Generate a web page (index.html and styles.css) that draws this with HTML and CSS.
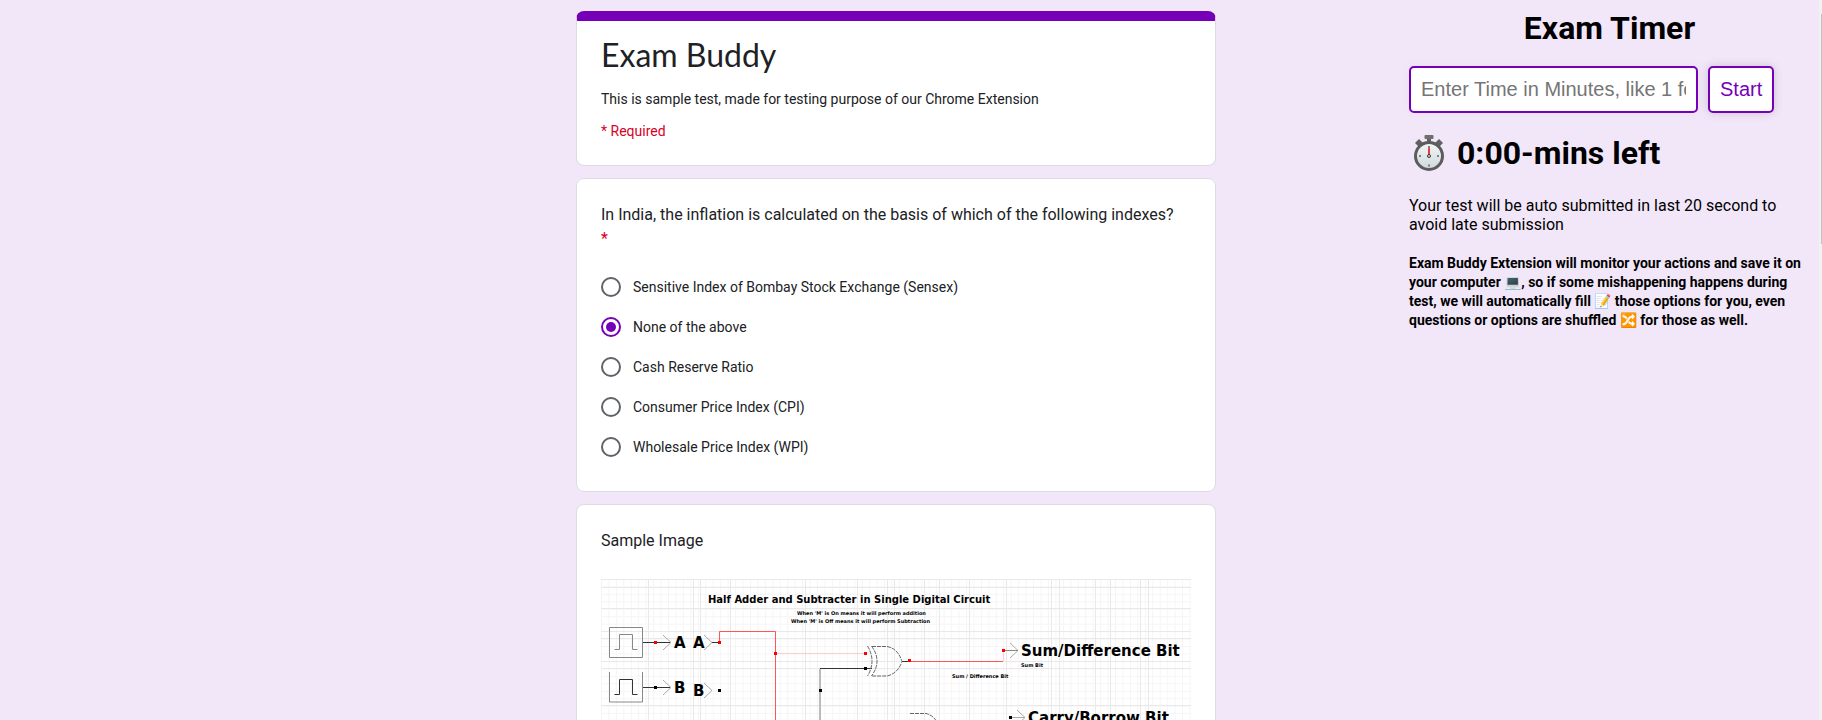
FILE: index.html
```
<!DOCTYPE html>
<html lang="en">
<head>
<meta charset="utf-8">
<title>Exam Buddy</title>
<link rel="stylesheet" href="styles.css">
</head>
<body>
<div class="page">
  <main class="form">
    <header class="card card-header">
      <h1 class="form-title">Exam Buddy</h1>
      <p class="form-description">This is sample test, made for testing purpose of our Chrome Extension</p>
      <p class="form-required">* Required</p>
    </header>

    <fieldset class="card question">
      <legend class="question-title">In India, the inflation is calculated on the basis of which of the following indexes? <span class="star">*</span></legend>
      <div class="options">
        <label class="option"><input class="radio" type="radio" name="index"> Sensitive Index of Bombay Stock Exchange (Sensex)</label>
        <label class="option"><input class="radio" type="radio" name="index" checked> None of the above</label>
        <label class="option"><input class="radio" type="radio" name="index"> Cash Reserve Ratio</label>
        <label class="option"><input class="radio" type="radio" name="index"> Consumer Price Index (CPI)</label>
        <label class="option"><input class="radio" type="radio" name="index"> Wholesale Price Index (WPI)</label>
      </div>
    </fieldset>

    <section class="card sample">
      <h2 class="question-title">Sample Image</h2>
      <svg class="circuit" viewBox="0 0 590 300" role="img" aria-label="Half adder and subtracter circuit">
        <defs>
          <pattern id="minor" width="7.45" height="7.45" patternUnits="userSpaceOnUse"><path d="M0 .5H8M.5 0V8" class="grid-minor"/></pattern>
        </defs>
        <rect width="590" height="300" fill="url(#minor)"/>
        <path class="grid-major" d="M47.500 0v300M92.500 0v300M99.500 0v300M129.500 0v300M204.500 0v300M256.500 0v300M286.500 0v300M293.500 0v300M323.500 0v300M338.500 0v300M368.500 0v300M405.500 0v300M450.500 0v300M458.500 0v300M494.500 0v300M509.500 0v300M539.500 0v300M547.500 0v300M0 .5h590M0 8.500h590M0 29.500h590M0 52.500h590M0 59.500h590M0 82.500h590M0 89.500h590M0 126.500h590"/>
        <g class="wire-grey">
          <path d="M8.500 48.500h33v30h-33z"/>
          <path d="M13.500 70.500h5v-15h13v15h5"/>
          <path d="M8.500 93v30h33V93"/>
        </g>
        <g class="arrow">
          <path d="M62 56l8 7.500-8 7.500M62 101l8 7.500-8 7.500"/>
          <path d="M103 56l8 7.500-8 7.500M103 104l8 7.500-8 7.500"/>
          <path d="M398 71.500M409 64l8 7.500-8 7.500M416 131l8 7.500-8 7.500M411 138.500h13"/>
        </g>
        <g class="wire">
          <path d="M42 63.500h27M42 108.500h27M111 63.500h7"/>
          <path d="M13.500 115.500h5v-15h13v15h5"/>
          <path d="M219 89.500h52M301 82.500h7"/>
        </g>
        <path class="wire-soft" d="M219 90v210"/>
        <path class="wire-red" d="M118.500 63V52.500h56V300M308 82.500h94"/>
        <path class="wire-pink" d="M175 74.500h90M402.500 82V71"/>
        <path class="wire-grey" d="M404 71.500h13"/>
        <g class="gate">
          <path d="M266.500 67q9 15 0 30M270.500 67q11 15 0 30M271 67.500h15q11 2 15 15q-4 12-15 14.500h-15"/>
          <path d="M309 134.500h16q9 2 14 14"/>
        </g>
        <g class="dot-red">
          <rect x="53" y="62" width="3" height="3"/><rect x="117" y="62" width="3" height="3"/><rect x="173" y="73" width="3" height="3"/><rect x="263" y="73" width="3" height="3"/><rect x="307" y="80" width="3" height="3"/><rect x="401" y="70" width="3" height="3"/>
        </g>
        <g class="dot">
          <rect x="53" y="107" width="3" height="3"/><rect x="117" y="110" width="3" height="3"/><rect x="218" y="110" width="3" height="3"/><rect x="263" y="88" width="3" height="3"/><rect x="408" y="137" width="3" height="3"/>
        </g>
        <g class="label">
          <text x="107" y="24" font-size="10">Half Adder and Subtracter in Single Digital Circuit</text>
          <text x="196" y="36" font-size="5">When 'M' is On means it will perform addition</text>
          <text x="190" y="44" font-size="5">When 'M' is Off means it will perform Subtraction</text>
          <text x="73" y="69" font-size="15">A</text>
          <text x="92" y="69" font-size="15">A</text>
          <text x="73" y="114" font-size="15">B</text>
          <text x="92" y="117" font-size="15">B</text>
          <text x="420" y="77" font-size="15">Sum/Difference Bit</text>
          <text x="420" y="88" font-size="5">Sum Bit</text>
          <text x="351" y="99" font-size="5">Sum / Difference Bit</text>
          <text x="427" y="144" font-size="15">Carry/Borrow Bit</text>
        </g>
      </svg>
    </section>
  </main>

  <aside class="timer">
    <h1 class="timer-title">Exam Timer</h1>
    <form class="timer-form">
      <input class="timer-input" type="text" aria-label="Time in minutes" placeholder="Enter Time in Minutes, like 1 for 1 minute">
      <button class="timer-button" type="button">Start</button>
    </form>
    <h1 class="timer-left">
      <svg class="stopwatch" viewBox="0 0 40 38" role="img" aria-label="Stopwatch">
        <defs>
          <linearGradient id="face" x1="0" y1="0" x2="0" y2="1"><stop offset="0" stop-color="#f4f6f7"/><stop offset="1" stop-color="#cfd8dc"/></linearGradient>
        </defs>
        <path d="M18 4h4v5h-4z" fill="#616161"/>
        <rect x="15.500" y="1" width="9" height="4" rx="1" fill="#6e6e6e"/>
        <path d="M6 9l4-4 4 4-4 4zM34 9l-4-4-4 4 4 4z" fill="#616161"/>
        <circle cx="20" cy="22" r="13.500" fill="url(#face)" stroke="#5c5c5c" stroke-width="3"/>
        <path d="M19 21V14.500q1-2 2 0V21z" fill="#f4333f"/>
        <circle cx="20" cy="22" r="1.500" fill="#ddd" stroke="#333"/>
        <path d="M20 12v2M20 30.500v2M10 22h2M28 22h2" stroke="#616161" stroke-width="1.500"/>
      </svg>
      <span>0:00-mins left</span>
    </h1>
    <p class="timer-note">Your test will be auto submitted in last 20 second to avoid late submission</p>
    <p class="timer-info">Exam Buddy Extension will monitor your actions and save it on your computer 💻, so if some mishappening happens during test, we will automatically fill 📝 those options for you, even questions or options are shuffled 🔀 for those as well.</p>
  </aside>
</div>
<div class="scrollbar"><div class="scrollbar-thumb"></div></div>
</body>
</html>
```
FILE: styles.css
```
* { box-sizing: border-box; }

body {
  margin: 0;
  height: 100vh;
  overflow: hidden;
  background: #f2e7f9;
  color: #202124;
  font-family: Roboto, sans-serif;
  font-size: 14px;
  line-height: 20px;
}

h1, h2, p { margin: 0; }

.page {
  display: grid;
  grid-template-columns: 1fr minmax(0, 640px) 1fr;
  padding-right: 30px;
}

.form {
  grid-column: 2;
  display: flex;
  flex-direction: column;
  gap: 12px;
  padding-top: 11px;
}

.card {
  margin: 0;
  padding: 24px;
  background: #fff;
  border: 1px solid #dadce0;
  border-radius: 8px;
}

.card-header {
  padding-top: 14px;
  border-top: 10px solid #7600b8;
}

.form-title {
  font-family: Lato, sans-serif;
  font-size: 32px;
  font-weight: 400;
  line-height: 40px;
}

.form-description { margin-top: 14px; }

.form-required {
  margin-top: 12px;
  color: #d90025;
}

.question-title {
  font-size: 16px;
  font-weight: 400;
  line-height: 24px;
}

.question .question-title {
  float: left;
  width: 100%;
  padding: 0;
}

.star {
  display: block;
  color: #d90025;
}

.options {
  clear: both;
  display: flex;
  flex-direction: column;
  gap: 20px;
  padding: 26px 0 10px;
}

.option {
  display: flex;
  align-items: center;
  gap: 12px;
}

.radio {
  appearance: none;
  display: grid;
  place-items: center;
  width: 20px;
  height: 20px;
  margin: 0;
  border: 2px solid #5f6368;
  border-radius: 50%;
}

.radio:checked { border-color: #7600b8; }

.radio:checked::before {
  content: "";
  width: 10px;
  height: 10px;
  border-radius: 50%;
  background: #7600b8;
}

.circuit {
  display: block;
  width: 100%;
  margin-top: 26px;
}

.circuit path { fill: none; }
.grid-minor { stroke: #f5f5f5; }
.grid-major { stroke: #e9e9e9; }
.wire-grey { stroke: #888; }
.arrow { stroke: #aaa; }
.wire { stroke: #333; }
.wire-soft { stroke: #bbb; stroke-width: 2; }
.wire-red { stroke: #f55; }
.wire-pink { stroke: #fcc; }
.gate { stroke: #666; stroke-dasharray: 4 1; }
.dot-red { fill: #f00; }
.dot { fill: #000; }

.label {
  font-family: "DejaVu Sans", sans-serif;
  font-weight: 700;
  fill: #000;
}

.timer {
  justify-self: end;
  width: 401px;
  margin-right: -18px;
  color: #000;
}

.timer-title {
  margin-top: 9px;
  font-size: 32px;
  line-height: 38px;
  text-align: center;
}

.timer-form {
  display: flex;
  gap: 10px;
  margin-top: 19px;
}

.timer-input, .timer-button {
  height: 47px;
  padding: 10px;
  border: 2px solid #7600b8;
  border-radius: 5px;
  background: #fff;
  font-family: "Liberation Sans", sans-serif;
  font-size: 20px;
}

.timer-input {
  width: 289px;
  box-shadow: 0 0 10px #e4e0f0;
}

.timer-button {
  color: #7600b8;
  box-shadow: 0 0 10px #c8c0d0;
}

.timer-left {
  display: flex;
  gap: 8px;
  margin-top: 21px;
  font-size: 32px;
  line-height: 38px;
}

.stopwatch {
  width: 40px;
  height: 38px;
}

.timer-note {
  margin-top: 24px;
  font-size: 16px;
  line-height: 19px;
}

.timer-info {
  margin-top: 20px;
  font-weight: 700;
  line-height: 19px;
}

.scrollbar {
  position: fixed;
  top: 0;
  right: 0;
  bottom: 0;
  width: 3px;
  padding: 14px 0 0 2px;
  background: #f1f1f1;
}

.scrollbar-thumb {
  height: 230px;
  background: #c1c1c1;
}
```
